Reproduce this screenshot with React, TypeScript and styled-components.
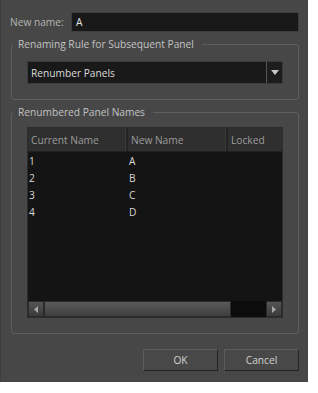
import React from "react";
import styled, { createGlobalStyle } from "styled-components";

const Global = createGlobalStyle`
  html, body { margin: 0; padding: 0; background: #ffffff; }
  body { font-family: "Open Sans", "Noto Sans", "Liberation Sans", sans-serif; font-size: 10.2px; }
`;

const Dialog = styled.div`
  box-sizing: border-box;
  width: 308px;
  height: 382px;
  background: #474747;
  border-left: 1px solid #3a3d41;
  padding: 12px 9px 0 9px;
  display: flex;
  flex-direction: column;
  color: #c4c4c4;
`;

const NameRow = styled.div`
  display: flex;
  align-items: center;
  gap: 8px;
  height: 20px;
`;

const Label = styled.span`
  color: #b4b4b4;
  white-space: nowrap;
  width: 53px;
`;

const TextInput = styled.div`
  box-sizing: border-box;
  flex: 1;
  height: 20px;
  background: #181818;
  border: 1px solid #3e3e3e;
  color: #e2e2e2;
  padding: 0 4px;
  display: flex;
  align-items: center;
`;

const Group = styled.fieldset<{ $gap: number }>`
  box-sizing: border-box;
  margin: ${(p) => p.$gap}px 0 0 1px;
  border: 1px solid #5e5e5e;
  border-radius: 3px;
  padding: 0 15px 15px 15px;
  min-inline-size: 0;
  display: flex;
  flex-direction: column;
`;

const Legend = styled.legend`
  color: #c2c2c2;
  padding: 0 8px 0 5px;
  margin-left: -14px;
  line-height: 14px;
  height: 14px;
`;

const Combo = styled.div`
  box-sizing: border-box;
  margin-top: 10px;
  height: 23px;
  display: flex;
  background: #191919;
  border: 1px solid #3c3c3c;
`;

const ComboText = styled.div`
  flex: 1;
  color: #dcdcdc;
  padding-left: 3px;
  display: flex;
  align-items: center;
`;

const ComboButton = styled.div`
  box-sizing: border-box;
  width: 16px;
  background: #1d1d1d;
  border-left: 1px solid #555555;
  display: flex;
  align-items: center;
  justify-content: center;
`;

const Table = styled.div`
  box-sizing: border-box;
  margin-top: 8px;
  height: 191px;
  background: #141414;
  border: 1px solid #2c2c2c;
  display: flex;
  flex-direction: column;
`;

const HeaderRow = styled.div`
  display: grid;
  grid-template-columns: 100px 100px 1fr;
  height: 23px;
  background: #2f2f2f;
  border-bottom: 1px solid #222;
`;

const HeaderCell = styled.div<{ $last?: boolean }>`
  color: #9c9c9c;
  display: flex;
  align-items: center;
  padding-left: 3px;
  border-right: ${(p) => (p.$last ? "none" : "2px solid #242424")};
  box-shadow: ${(p) => (p.$last ? "none" : "inset -1px 0 0 #3a3a3a")};
`;

const Body = styled.div`
  flex: 1;
`;

const Row = styled.div`
  display: grid;
  grid-template-columns: 100px 100px 1fr;
  height: 17px;
  align-items: center;
`;

const Cell = styled.div`
  color: #dad6d2;
  padding-left: 1px;
`;

const ScrollBar = styled.div`
  height: 16px;
  display: flex;
  background: #0e0e0e;
`;

const ArrowBtn = styled.div`
  width: 16px;
  display: flex;
  align-items: center;
  justify-content: center;
  background: linear-gradient(#555555, #3a3a3a);
  border: 1px solid #2a2a2a;
  box-sizing: border-box;
`;

const Thumb = styled.div<{ $w: number }>`
  width: ${(p) => p.$w}px;
  background: linear-gradient(#5a5a5a, #3e3e3e);
  border: 1px solid #2a2a2a;
  box-sizing: border-box;
`;

const Track = styled.div`
  flex: 1;
  background: #0c0c0c;
`;

const Buttons = styled.div`
  display: flex;
  justify-content: flex-end;
  gap: 6px;
  margin-top: 15px;
`;

const Button = styled.div`
  box-sizing: border-box;
  width: 75px;
  height: 22px;
  background: #484848;
  border-top: 1px solid #5c5c5c;
  border-left: 1px solid #5c5c5c;
  border-right: 1px solid #222222;
  border-bottom: 1px solid #222222;
  color: #d2d2d2;
  display: flex;
  align-items: center;
  justify-content: center;
`;

const rows = [
  ["1", "A"],
  ["2", "B"],
  ["3", "C"],
  ["4", "D"],
];

export default function App() {
  return (
    <>
      <Global />
      <Dialog>
        <NameRow>
          <Label>New name:</Label>
          <TextInput>A</TextInput>
        </NameRow>
        <Group $gap={5}>
          <Legend>Renaming Rule for Subsequent Panel</Legend>
          <Combo>
            <ComboText>Renumber Panels</ComboText>
            <ComboButton>
              <svg width="8" height="5" viewBox="0 0 8 5">
                <path d="M0 0 H8 L4 5 Z" fill="#c8c8c8" />
              </svg>
            </ComboButton>
          </Combo>
        </Group>
        <Group $gap={5}>
          <Legend>Renumbered Panel Names</Legend>
          <Table>
            <HeaderRow>
              <HeaderCell>Current Name</HeaderCell>
              <HeaderCell>New Name</HeaderCell>
              <HeaderCell $last>Locked</HeaderCell>
            </HeaderRow>
            <Body>
              {rows.map(([a, b]) => (
                <Row key={a}>
                  <Cell>{a}</Cell>
                  <Cell>{b}</Cell>
                  <Cell />
                </Row>
              ))}
            </Body>
            <ScrollBar>
              <ArrowBtn>
                <svg width="4" height="7" viewBox="0 0 4 7">
                  <path d="M4 0 V7 L0 3.5 Z" fill="#a8a8a8" />
                </svg>
              </ArrowBtn>
              <Thumb $w={187} />
              <Track />
              <ArrowBtn>
                <svg width="4" height="7" viewBox="0 0 4 7">
                  <path d="M0 0 V7 L4 3.5 Z" fill="#a8a8a8" />
                </svg>
              </ArrowBtn>
            </ScrollBar>
          </Table>
        </Group>
        <Buttons>
          <Button>OK</Button>
          <Button>Cancel</Button>
        </Buttons>
      </Dialog>
    </>
  );
}
